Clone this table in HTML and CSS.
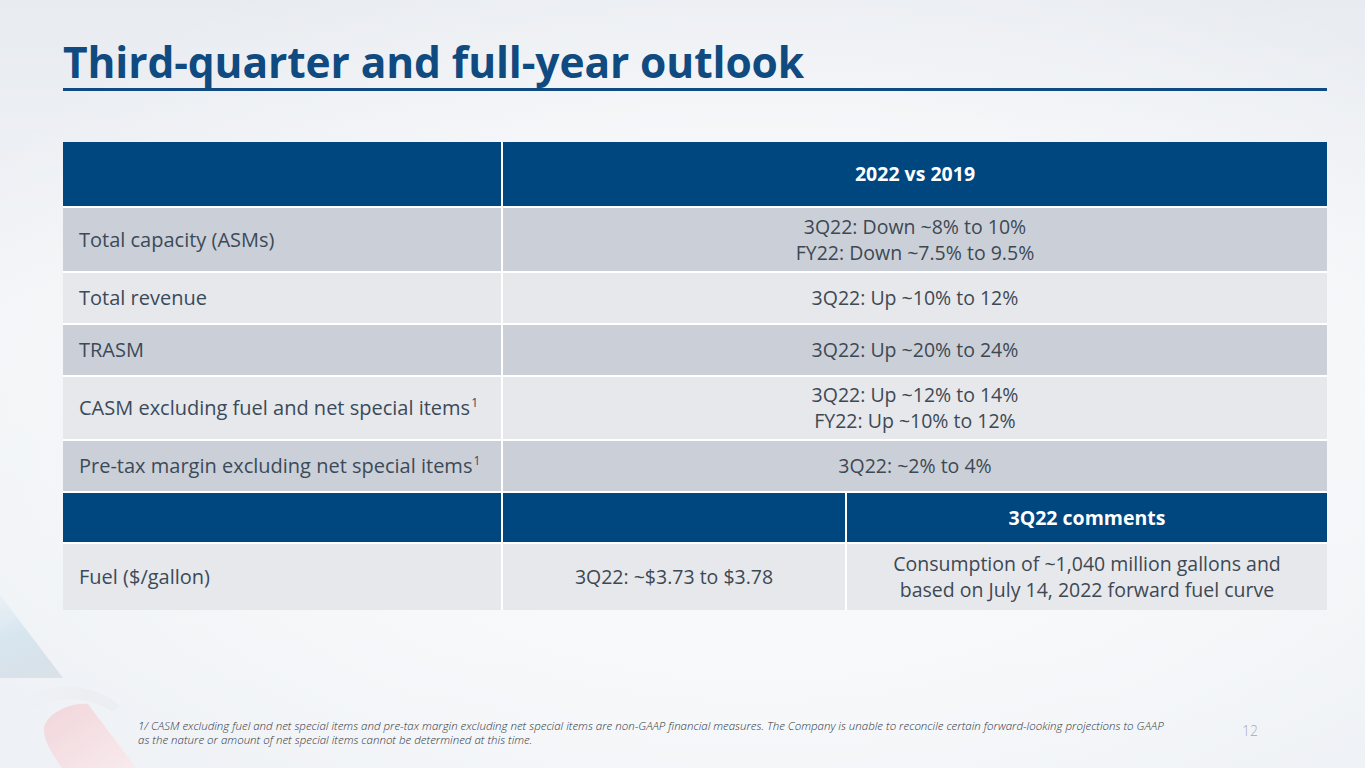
FILE: index.html
```html
<!DOCTYPE html>
<html lang="en">
<head>
<meta charset="utf-8">
<title>Third-quarter and full-year outlook</title>
<link rel="stylesheet" href="styles.css">
</head>
<body>
<div class="slide">
  <svg class="logo" width="160" height="190" viewBox="0 0 160 190" aria-hidden="true">
    <defs>
      <linearGradient id="gb" x1="0" y1="0" x2="0.3" y2="1">
        <stop offset="0" stop-color="#dce9f3" stop-opacity="0.3"/>
        <stop offset="0.5" stop-color="#d4e4ef" stop-opacity="0.9"/>
        <stop offset="1" stop-color="#d9e1e9"/>
      </linearGradient>
      <linearGradient id="gg" x1="0" y1="0" x2="1" y2="0">
        <stop offset="0" stop-color="#eef0f3" stop-opacity="0.1"/>
        <stop offset="0.6" stop-color="#eceef1"/>
        <stop offset="1" stop-color="#eceef1"/>
      </linearGradient>
      <linearGradient id="gr" x1="0" y1="0" x2="1" y2="1">
        <stop offset="0" stop-color="#f1d6db"/>
        <stop offset="1" stop-color="#f8eaed"/>
      </linearGradient>
    </defs>
    <path d="M0 17 L63 100 L0 100 Z" fill="url(#gb)"/>
    <path d="M20 124 C44 104 92 102 120 128 L112 134 C90 118 54 116 34 132 Z" fill="url(#gg)"/>
    <path d="M44 150 C46 136 70 124 88 126 L136 190 L62 190 C52 176 43 162 44 150 Z" fill="url(#gr)"/>
  </svg>
  <header class="title-bar">
    <h1 class="title">Third-quarter and full-year outlook</h1>
  </header>
  <div class="grid">
    <div class="cell head"></div>
    <div class="cell head span2 val">2022 vs 2019</div>

    <div class="cell dark label">Total capacity (ASMs)</div>
    <div class="cell dark span2 val">3Q22: Down ~8% to 10%<br>FY22: Down ~7.5% to 9.5%</div>

    <div class="cell light label">Total revenue</div>
    <div class="cell light span2 val">3Q22: Up ~10% to 12%</div>

    <div class="cell dark label">TRASM</div>
    <div class="cell dark span2 val">3Q22: Up ~20% to 24%</div>

    <div class="cell light label"><span>CASM excluding fuel and net special items<sup>1</sup></span></div>
    <div class="cell light span2 val">3Q22: Up ~12% to 14%<br>FY22: Up ~10% to 12%</div>

    <div class="cell dark label"><span>Pre-tax margin excluding net special items<sup>1</sup></span></div>
    <div class="cell dark span2 val">3Q22: ~2% to 4%</div>

    <div class="cell head"></div>
    <div class="cell head"></div>
    <div class="cell head val">3Q22 comments</div>

    <div class="cell light label">Fuel ($/gallon)</div>
    <div class="cell light val">3Q22: ~$3.73 to $3.78</div>
    <div class="cell light val">Consumption of ~1,040 million gallons and<br>based on July 14, 2022 forward fuel curve</div>
  </div>
  <footer class="foot">
    <p class="note">1/ CASM excluding fuel and net special items and pre-tax margin excluding net special items are non-GAAP financial measures. The Company is unable to reconcile certain forward-looking projections to GAAP<br>as the nature or amount of net special items cannot be determined at this time.</p>
    <span class="page">12</span>
  </footer>
</div>
</body>
</html>
```

FILE: styles.css
```css
html, body {
  margin: 0;
  padding: 0;
}
body {
  width: 1365px;
  height: 768px;
  overflow: hidden;
}
.slide {
  position: relative;
  width: 1365px;
  height: 768px;
  box-sizing: border-box;
  padding: 0 38px 0 63px;
  display: flex;
  flex-direction: column;
  background:
    radial-gradient(ellipse 900px 520px at 760px 420px, #fbfcfd 0%, rgba(251,252,253,0.6) 55%, rgba(251,252,253,0) 100%),
    linear-gradient(180deg, #e8ebf0 0%, #f2f4f7 40%, #eef1f5 100%);
  font-family: "Open Sans", "Noto Sans", sans-serif;
}
.logo {
  position: absolute;
  left: 0;
  bottom: 0;
}
.title-bar {
  border-bottom: 3px solid #0f4a80;
  padding-top: 36px;
  height: 52px;
}
.title {
  margin: 0;
  font-family: "Open Sans", "Noto Sans", sans-serif;
  font-weight: 700;
  font-size: 42.5px;
  line-height: 52px;
  color: #0f4a80;
  letter-spacing: -0.1px;
}
.grid {
  margin-top: 51px;
  display: grid;
  grid-template-columns: 438px 342px 480px;
  grid-template-rows: 64px 63px 50px 50px 62px 50px 49px 66px;
  gap: 2px;
  background: #ffffff;
}
.cell {
  display: flex;
  align-items: center;
  font-size: 20px;
  line-height: 26px;
  color: #3b4a59;
}
.span2 {
  grid-column: span 2;
}
.head {
  background: #00467f;
  color: #ffffff;
}
.dark {
  background: #cbd0d8;
}
.light {
  background: #e6e8ec;
}
.label {
  padding-left: 16px;
}
.label sup {
  font-size: 12px;
  line-height: 0;
  vertical-align: super;
  margin-left: 1px;
}
.val {
  justify-content: center;
  text-align: center;
  font-size: 19.5px;
  color: #3e4853;
}
.head.val {
  font-weight: 700;
  font-size: 19.5px;
  color: #ffffff;
}
.foot {
  margin-top: auto;
  padding: 0 69px 21px 75px;
  display: flex;
  justify-content: space-between;
  align-items: center;
}
.note {
  margin: 0;
  font-style: italic;
  font-weight: 300;
  font-size: 11.5px;
  line-height: 14px;
  color: #2f353d;
}
.page {
  font-size: 14px;
  font-weight: 300;
  color: #a3abb4;
  margin-top: -6px;
}
```
